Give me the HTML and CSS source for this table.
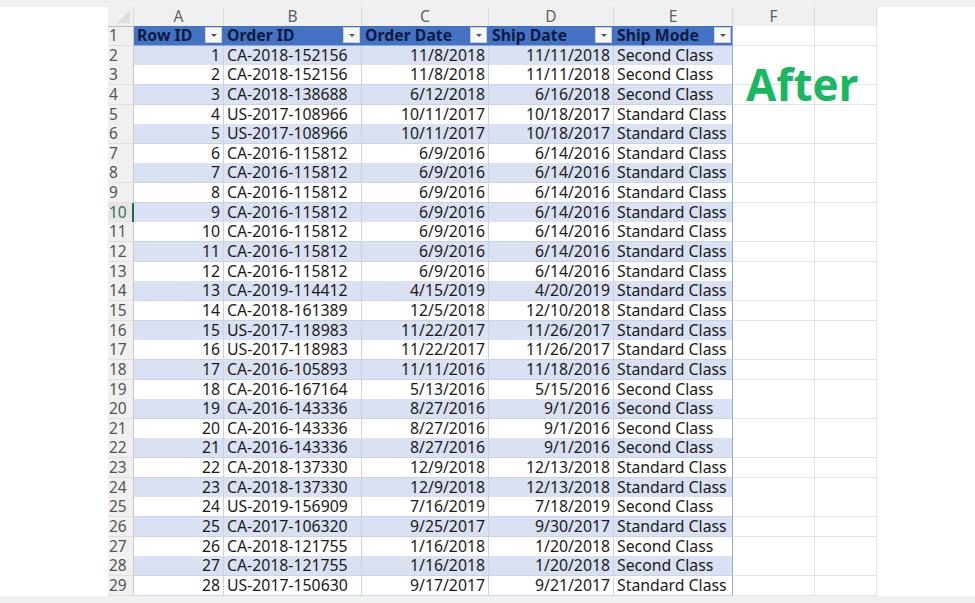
FILE: index.html
```html
<!DOCTYPE html>
<html>
<head>
<meta charset="utf-8">
<link rel="stylesheet" href="styles.css">
</head>
<body>
<div class="strip"></div>
<div class="stage">
  <div class="side-left"></div>
  <div class="sheet">
    <div class="row colhead">
      <div class="corner"><span class="tri"></span></div>
      <div class="ch">A</div><div class="ch">B</div><div class="ch">C</div><div class="ch">D</div><div class="ch">E</div><div class="ch">F</div><div class="ch"></div>
    </div>
    <div class="row">
      <div class="h">1</div>
      <div class="th">Row ID<span class="fb"></span></div>
      <div class="th">Order ID<span class="fb"></span></div>
      <div class="th">Order Date<span class="fb"></span></div>
      <div class="th">Ship Date<span class="fb"></span></div>
      <div class="th last">Ship Mode<span class="fb"></span></div>
      <div class="e"></div><div class="e"></div>
    </div>
    <div class="row b"><div class="h">2</div><div class="n">1</div><div class="t">CA-2018-152156</div><div class="n">11/8/2018</div><div class="n">11/11/2018</div><div class="t last">Second Class</div><div class="e"></div><div class="e"></div></div>
    <div class="row"><div class="h">3</div><div class="n">2</div><div class="t">CA-2018-152156</div><div class="n">11/8/2018</div><div class="n">11/11/2018</div><div class="t last">Second Class</div><div class="e"></div><div class="e"></div></div>
    <div class="row b"><div class="h">4</div><div class="n">3</div><div class="t">CA-2018-138688</div><div class="n">6/12/2018</div><div class="n">6/16/2018</div><div class="t last">Second Class</div><div class="e"></div><div class="e"></div></div>
    <div class="row"><div class="h">5</div><div class="n">4</div><div class="t">US-2017-108966</div><div class="n">10/11/2017</div><div class="n">10/18/2017</div><div class="t last">Standard Class</div><div class="e"></div><div class="e"></div></div>
    <div class="row b"><div class="h">6</div><div class="n">5</div><div class="t">US-2017-108966</div><div class="n">10/11/2017</div><div class="n">10/18/2017</div><div class="t last">Standard Class</div><div class="e"></div><div class="e"></div></div>
    <div class="row"><div class="h">7</div><div class="n">6</div><div class="t">CA-2016-115812</div><div class="n">6/9/2016</div><div class="n">6/14/2016</div><div class="t last">Standard Class</div><div class="e"></div><div class="e"></div></div>
    <div class="row b"><div class="h">8</div><div class="n">7</div><div class="t">CA-2016-115812</div><div class="n">6/9/2016</div><div class="n">6/14/2016</div><div class="t last">Standard Class</div><div class="e"></div><div class="e"></div></div>
    <div class="row"><div class="h">9</div><div class="n">8</div><div class="t">CA-2016-115812</div><div class="n">6/9/2016</div><div class="n">6/14/2016</div><div class="t last">Standard Class</div><div class="e"></div><div class="e"></div></div>
    <div class="row b"><div class="h sel">10</div><div class="n">9</div><div class="t">CA-2016-115812</div><div class="n">6/9/2016</div><div class="n">6/14/2016</div><div class="t last">Standard Class</div><div class="e"></div><div class="e"></div></div>
    <div class="row"><div class="h">11</div><div class="n">10</div><div class="t">CA-2016-115812</div><div class="n">6/9/2016</div><div class="n">6/14/2016</div><div class="t last">Standard Class</div><div class="e"></div><div class="e"></div></div>
    <div class="row b"><div class="h">12</div><div class="n">11</div><div class="t">CA-2016-115812</div><div class="n">6/9/2016</div><div class="n">6/14/2016</div><div class="t last">Standard Class</div><div class="e"></div><div class="e"></div></div>
    <div class="row"><div class="h">13</div><div class="n">12</div><div class="t">CA-2016-115812</div><div class="n">6/9/2016</div><div class="n">6/14/2016</div><div class="t last">Standard Class</div><div class="e"></div><div class="e"></div></div>
    <div class="row b"><div class="h">14</div><div class="n">13</div><div class="t">CA-2019-114412</div><div class="n">4/15/2019</div><div class="n">4/20/2019</div><div class="t last">Standard Class</div><div class="e"></div><div class="e"></div></div>
    <div class="row"><div class="h">15</div><div class="n">14</div><div class="t">CA-2018-161389</div><div class="n">12/5/2018</div><div class="n">12/10/2018</div><div class="t last">Standard Class</div><div class="e"></div><div class="e"></div></div>
    <div class="row b"><div class="h">16</div><div class="n">15</div><div class="t">US-2017-118983</div><div class="n">11/22/2017</div><div class="n">11/26/2017</div><div class="t last">Standard Class</div><div class="e"></div><div class="e"></div></div>
    <div class="row"><div class="h">17</div><div class="n">16</div><div class="t">US-2017-118983</div><div class="n">11/22/2017</div><div class="n">11/26/2017</div><div class="t last">Standard Class</div><div class="e"></div><div class="e"></div></div>
    <div class="row b"><div class="h">18</div><div class="n">17</div><div class="t">CA-2016-105893</div><div class="n">11/11/2016</div><div class="n">11/18/2016</div><div class="t last">Standard Class</div><div class="e"></div><div class="e"></div></div>
    <div class="row"><div class="h">19</div><div class="n">18</div><div class="t">CA-2016-167164</div><div class="n">5/13/2016</div><div class="n">5/15/2016</div><div class="t last">Second Class</div><div class="e"></div><div class="e"></div></div>
    <div class="row b"><div class="h">20</div><div class="n">19</div><div class="t">CA-2016-143336</div><div class="n">8/27/2016</div><div class="n">9/1/2016</div><div class="t last">Second Class</div><div class="e"></div><div class="e"></div></div>
    <div class="row"><div class="h">21</div><div class="n">20</div><div class="t">CA-2016-143336</div><div class="n">8/27/2016</div><div class="n">9/1/2016</div><div class="t last">Second Class</div><div class="e"></div><div class="e"></div></div>
    <div class="row b"><div class="h">22</div><div class="n">21</div><div class="t">CA-2016-143336</div><div class="n">8/27/2016</div><div class="n">9/1/2016</div><div class="t last">Second Class</div><div class="e"></div><div class="e"></div></div>
    <div class="row"><div class="h">23</div><div class="n">22</div><div class="t">CA-2018-137330</div><div class="n">12/9/2018</div><div class="n">12/13/2018</div><div class="t last">Standard Class</div><div class="e"></div><div class="e"></div></div>
    <div class="row b"><div class="h">24</div><div class="n">23</div><div class="t">CA-2018-137330</div><div class="n">12/9/2018</div><div class="n">12/13/2018</div><div class="t last">Standard Class</div><div class="e"></div><div class="e"></div></div>
    <div class="row"><div class="h">25</div><div class="n">24</div><div class="t">US-2019-156909</div><div class="n">7/16/2019</div><div class="n">7/18/2019</div><div class="t last">Second Class</div><div class="e"></div><div class="e"></div></div>
    <div class="row b"><div class="h">26</div><div class="n">25</div><div class="t">CA-2017-106320</div><div class="n">9/25/2017</div><div class="n">9/30/2017</div><div class="t last">Standard Class</div><div class="e"></div><div class="e"></div></div>
    <div class="row"><div class="h">27</div><div class="n">26</div><div class="t">CA-2018-121755</div><div class="n">1/16/2018</div><div class="n">1/20/2018</div><div class="t last">Second Class</div><div class="e"></div><div class="e"></div></div>
    <div class="row b"><div class="h">28</div><div class="n">27</div><div class="t">CA-2018-121755</div><div class="n">1/16/2018</div><div class="n">1/20/2018</div><div class="t last">Second Class</div><div class="e"></div><div class="e"></div></div>
    <div class="row"><div class="h">29</div><div class="n">28</div><div class="t">US-2017-150630</div><div class="n">9/17/2017</div><div class="n">9/21/2017</div><div class="t last">Standard Class</div><div class="e"></div><div class="e"></div></div>
    <div class="after">After</div>
  </div>
  <div class="side-right"></div>
</div>
<div class="strip"></div>
</body>
</html>
```

FILE: styles.css
```css
html, body {
  margin: 0;
  padding: 0;
  background: #ffffff;
}
body {
  width: 975px;
  height: 603px;
  overflow: hidden;
  font-family: "Noto Sans", "Open Sans", sans-serif;
  font-size: 15.8px;
  color: #1a1a1a;
}
.strip {
  height: 7px;
  background: #f0f0f0;
}
.stage {
  display: flex;
  height: 589px;
}
.side-left {
  width: 108px;
  background: #ffffff;
}
.side-right {
  flex: 1;
  background: #ffffff;
}
.sheet {
  position: relative;
  width: 769px;
  display: flex;
  flex-direction: column;
}
.row {
  display: grid;
  grid-template-columns: 26px 90px 138px 127px 125px 119px 82px 62px;
  height: 19.655px;
  line-height: 19px;
  background: #ffffff;
}
.row > div {
  box-sizing: border-box;
  border-right: 1px solid #dcdcdc;
  border-bottom: 1px solid #dcdcdc;
  white-space: nowrap;
}
.row.b > .n, .row.b > .t {
  background: #d9e1f2;
}
.row > .n, .row > .t {
  border-color: #c9d3e6;
}
.colhead {
  height: 19px;
  background: #f0f0f0;
}
.colhead > div {
  border-right: 1px solid #dadada;
  border-bottom: 1px solid #bdbdbd;
  background: #f0f0f0;
}
.ch {
  text-align: center;
  color: #5f5f5f;
  font-size: 15.5px;
  line-height: 19px;
}
.corner {
  position: relative;
}
.tri {
  position: absolute;
  right: 3px;
  bottom: 3px;
  width: 0;
  height: 0;
  border-left: 13px solid transparent;
  border-bottom: 13px solid #dedede;
}
.h {
  background: #f0f0f0;
  color: #555555;
  padding-left: 1px;
  font-size: 15.5px;
  border-right: 1px solid #c8c8c8 !important;
  border-bottom: 1px solid #e0e0e0 !important;
}
.h.sel {
  background: #e6e6e6;
  color: #3d6d52;
  border-right: 2px solid #1e6b45 !important;
}
.n {
  text-align: right;
  padding-right: 3px;
}
.t {
  padding-left: 3px;
}
.e {
  background: #ffffff;
  border-color: #e4e4e4 !important;
}
.row > .last {
  border-right: 1px solid #8ea9db;
}
.th {
  position: relative;
  background: #4472c4;
  color: #0d1b3e;
  font-weight: 700;
  padding-left: 3px;
  border-right: 1px solid #4472c4 !important;
  border-bottom: 1px solid #8ea9db !important;
}
.th.last {
  border-right: 1px solid #8ea9db !important;
}
.fb {
  position: absolute;
  right: 1px;
  top: 1px;
  width: 17px;
  height: 16px;
  box-sizing: border-box;
  background: #f7f7f7;
  border: 1px solid #d0d0d0;
}
.fb::after {
  content: "";
  position: absolute;
  left: 5px;
  top: 6px;
  width: 0;
  height: 0;
  border-left: 3px solid transparent;
  border-right: 3px solid transparent;
  border-top: 3px solid #555555;
}
.after {
  position: absolute;
  left: 638px;
  top: 55px;
  font-family: "Open Sans", "Noto Sans", sans-serif;
  font-weight: 700;
  font-size: 44px;
  line-height: 44px;
  color: #17b860;
  letter-spacing: 0px;
}
```
